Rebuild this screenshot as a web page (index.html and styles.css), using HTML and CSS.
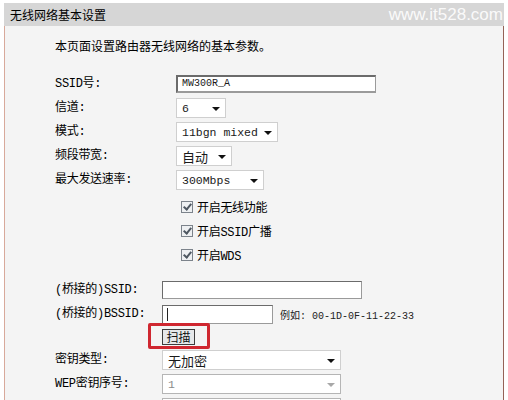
FILE: index.html
```html
<!DOCTYPE html>
<html>
  <head>
    <meta charset="utf-8">
    <title>无线网络基本设置</title>
    <link rel="stylesheet" href="styles.css">
  </head>
  <body>
    <div class="panel">
      <div class="panel-head">
        <span class="head-title">无线网络基本设置</span>
        <span class="watermark">www.it528.com</span>
      </div>
      <div class="panel-body">
        <p class="intro">本页面设置路由器无线网络的基本参数。</p>

        <div class="group group-main">
          <div class="row">
            <span class="label">SSID号:</span>
            <div class="text-input ssid">MW300R_A</div>
          </div>
          <div class="row">
            <span class="label">信道:</span>
            <div class="select w-channel"><span>6</span><i class="arrow"></i></div>
          </div>
          <div class="row">
            <span class="label">模式:</span>
            <div class="select w-mode"><span>11bgn mixed</span><i class="arrow"></i></div>
          </div>
          <div class="row">
            <span class="label">频段带宽:</span>
            <div class="select w-band"><span class="cn">自动</span><i class="arrow"></i></div>
          </div>
          <div class="row">
            <span class="label">最大发送速率:</span>
            <div class="select w-rate"><span>300Mbps</span><i class="arrow"></i></div>
          </div>
          <div class="row check-first">
            <span></span>
            <label class="check"><i class="box"></i>开启无线功能</label>
          </div>
          <div class="row">
            <span></span>
            <label class="check"><i class="box"></i>开启SSID广播</label>
          </div>
          <div class="row">
            <span></span>
            <label class="check"><i class="box"></i>开启WDS</label>
          </div>
        </div>

        <div class="group group-wds">
          <div class="row">
            <span class="label">(桥接的)SSID:</span>
            <div class="text-input w-bridge"></div>
          </div>
          <div class="row">
            <span class="label">(桥接的)BSSID:</span>
            <div class="bssid">
              <div class="text-input w-bssid"><i class="caret"></i></div>
              <span class="hint">例如: 00-1D-0F-11-22-33</span>
            </div>
          </div>
          <div class="row row-scan">
            <span></span>
            <div class="scan">
              <button class="scan-btn">扫描</button>
              <div class="mark"></div>
            </div>
          </div>
          <div class="row">
            <span class="label">密钥类型:</span>
            <div class="select w-key"><span class="cn">无加密</span><i class="arrow"></i></div>
          </div>
          <div class="row">
            <span class="label">WEP密钥序号:</span>
            <div class="select w-key disabled"><span>1</span><i class="arrow"></i></div>
          </div>
          <div class="row">
            <span></span>
            <div class="select w-key disabled"></div>
          </div>
        </div>
      </div>
    </div>
  </body>
</html>
```

FILE: styles.css
```css
body{
  margin: 0;
  background-color: #ffffff;
  font-family: "Noto Sans CJK SC", sans-serif;
  font-size: 12px;
  color: #1a1a1a;
  overflow: hidden;
}
.panel{
  margin: 3px 0 0 4px;
  width: 500px;
}
.panel-head{
  height: 23px;
  background-color: #d6d6d6;
  display: flex;
  align-items: center;
  justify-content: space-between;
  padding-left: 6px;
  overflow: hidden;
}
.head-title{
  font-size: 12px;
  line-height: 14px;
  color: #000;
}
.watermark{
  font-family: "Liberation Sans", Arial, sans-serif;
  font-size: 17px;
  color: rgba(255, 255, 255, 0.9);
  margin-right: 1px;
  margin-top: 1px;
  white-space: nowrap;
}
.panel-body{
  background-color: #f4f4f4;
  border-left: 1px solid #d8a99b;
  border-right: 1px solid #946257;
  padding-left: 50px;
  height: 420px;
  box-sizing: border-box;
  padding-top: 12px;
}
.intro{
  margin: 0;
  line-height: 16px;
  font-size: 12px;
  color: #000;
}
.group-main{
  margin-top: 18px;
}
.group-wds{
  margin-top: 11px;
}
.row{
  display: grid;
  height: 24px;
  align-items: center;
}
.group-main .row{
  grid-template-columns: 121px auto;
}
.group-wds .row{
  grid-template-columns: 107px auto;
}
.check-first{
  margin-top: 3px;
}
.row-scan{
  height: 22px;
}
.label{
  font-family: "Liberation Mono", "Noto Sans CJK SC", monospace;
  font-size: 12px;
  line-height: 14px;
  color: #000;
  letter-spacing: -0.3px;
}
.text-input{
  height: 18px;
  background-color: #fff;
  border: 1px solid #6b6b6b;
  border-right-color: #9a9a9a;
  border-bottom-color: #9a9a9a;
  box-sizing: border-box;
  font-family: "Liberation Mono", monospace;
  font-size: 10px;
  line-height: 16px;
  padding-left: 4px;
}
.ssid{
  width: 200px;
  border-width: 2px 1px 2px 2px;
  line-height: 14px;
}
.w-bridge{
  width: 200px;
}
.bssid{
  display: flex;
  align-items: center;
}
.w-bssid{
  width: 111px;
  height: 19px;
  position: relative;
}
.caret{
  display: block;
  width: 1px;
  height: 13px;
  margin-top: 2px;
  background-color: #222;
}
.hint{
  margin-left: 7px;
  font-family: "Liberation Mono", "Noto Sans CJK SC", monospace;
  font-size: 10px;
  color: #222;
}
.select{
  height: 20px;
  background-color: #fff;
  border: 1px solid #cfcfcf;
  box-sizing: border-box;
  display: flex;
  align-items: center;
  justify-content: space-between;
  padding: 0 5px 0 5px;
  font-family: "Liberation Mono", monospace;
  font-size: 11.5px;
  color: #1a1a1a;
}
.select .cn{
  font-family: "Noto Sans CJK SC", sans-serif;
  font-size: 13px;
}
.arrow{
  width: 0;
  height: 0;
  border-left: 4px solid transparent;
  border-right: 4px solid transparent;
  border-top: 4px solid #111;
  margin-top: 1px;
}
.w-channel{ width: 50px; }
.w-mode{ width: 102px; }
.w-band{ width: 56px; }
.w-rate{ width: 88px; }
.w-key{ width: 179px; }
.disabled{
  border-color: #b5b5b5;
  color: #8a8a8a;
}
.disabled .arrow{
  border-top-color: #a8a8a8;
}
.check{
  display: flex;
  align-items: center;
  margin-left: 5px;
  font-family: "Liberation Mono", "Noto Sans CJK SC", monospace;
  font-size: 12px;
  letter-spacing: -0.3px;
  color: #000;
}
.box{
  width: 12px;
  height: 12px;
  box-sizing: border-box;
  border: 1px solid #7c838b;
  background-color: #eef0f2;
  margin-right: 4px;
  position: relative;
}
.box::after{
  content: "";
  position: absolute;
  left: 3px;
  top: 0px;
  width: 3px;
  height: 6px;
  border-right: 2px solid #4f5862;
  border-bottom: 2px solid #4f5862;
  transform: rotate(40deg);
}
.scan{
  position: relative;
  width: 33px;
  height: 16px;
}
.scan-btn{
  width: 33px;
  height: 16px;
  padding: 0;
  margin: 0;
  border: 1px solid #3d3d3d;
  background-color: #e6e8ea;
  font-family: "Noto Sans CJK SC", sans-serif;
  font-size: 12px;
  line-height: 14px;
  color: #111;
  display: block;
}
.mark{
  position: absolute;
  left: -14px;
  top: -6px;
  width: 62px;
  height: 26px;
  border: 3px solid #cf2730;
  border-radius: 2px;
  box-sizing: border-box;
}
```
